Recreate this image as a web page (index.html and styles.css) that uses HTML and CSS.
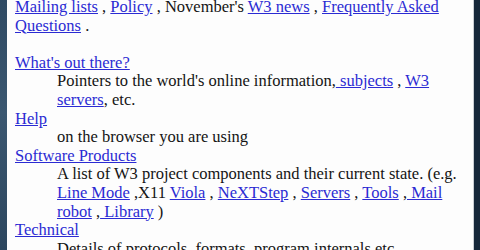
FILE: index.html
```html
<!DOCTYPE html>
<html>
<head>
<meta charset="utf-8">
<link rel="stylesheet" href="styles.css">
</head>
<body>
<div class="window">
  <div class="edge-left"></div>
  <div class="page">
    <div class="scroll">
      <p class="intro"><a href="#">Mailing lists</a> , <a href="#">Policy</a> , November's <a href="#">W3 news</a> , <a href="#">Frequently Asked Questions</a> .</p>
      <dl class="topics">
        <dt><a href="#">What's out there?</a></dt>
        <dd>Pointers to the world's online information,<a href="#"> subjects</a> , <a href="#">W3 servers</a>, etc.</dd>
        <dt><a href="#">Help</a></dt>
        <dd>on the browser you are using</dd>
        <dt><a href="#">Software Products</a></dt>
        <dd>A list of W3 project components and their current state. (e.g. <a href="#">Line Mode</a> ,X11 <a href="#">Viola</a> , <a href="#">NeXTStep</a> , <a href="#">Servers</a> , <a href="#">Tools</a> ,<a href="#"> Mail robot</a> ,<a href="#"> Library</a> )</dd>
        <dt><a href="#">Technical</a></dt>
        <dd>Details of protocols, formats, program internals etc</dd>
      </dl>
    </div>
  </div>
  <div class="edge-right"></div>
</div>
</body>
</html>
```
FILE: styles.css
```css
html, body {
  margin: 0;
  padding: 0;
  background: #1a2b3c;
}
.window {
  display: flex;
  width: 480px;
  height: 250px;
  overflow: hidden;
}
.edge-left {
  width: 7px;
  background: linear-gradient(180deg, #2f4a63 0%, #3b5770 45%, #2c465e 100%);
}
.edge-right {
  width: 6px;
  background: #16283a;
  border-left: 1px solid #c9ced3;
}
.page {
  flex: 1;
  background: #fdfdfd;
  padding: 0 8px;
  overflow: hidden;
  font-family: "Liberation Serif", "Times New Roman", serif;
  font-size: 16.5px;
  line-height: 18.6px;
  color: #141414;
}
.scroll {
  margin-top: -2px;
}
.intro {
  margin: 0 0 18.6px;
}
.topics {
  margin: 0;
}
.topics dd {
  margin-left: 42px;
}
a {
  color: #2b2bd3;
  text-decoration: underline;
}
```
